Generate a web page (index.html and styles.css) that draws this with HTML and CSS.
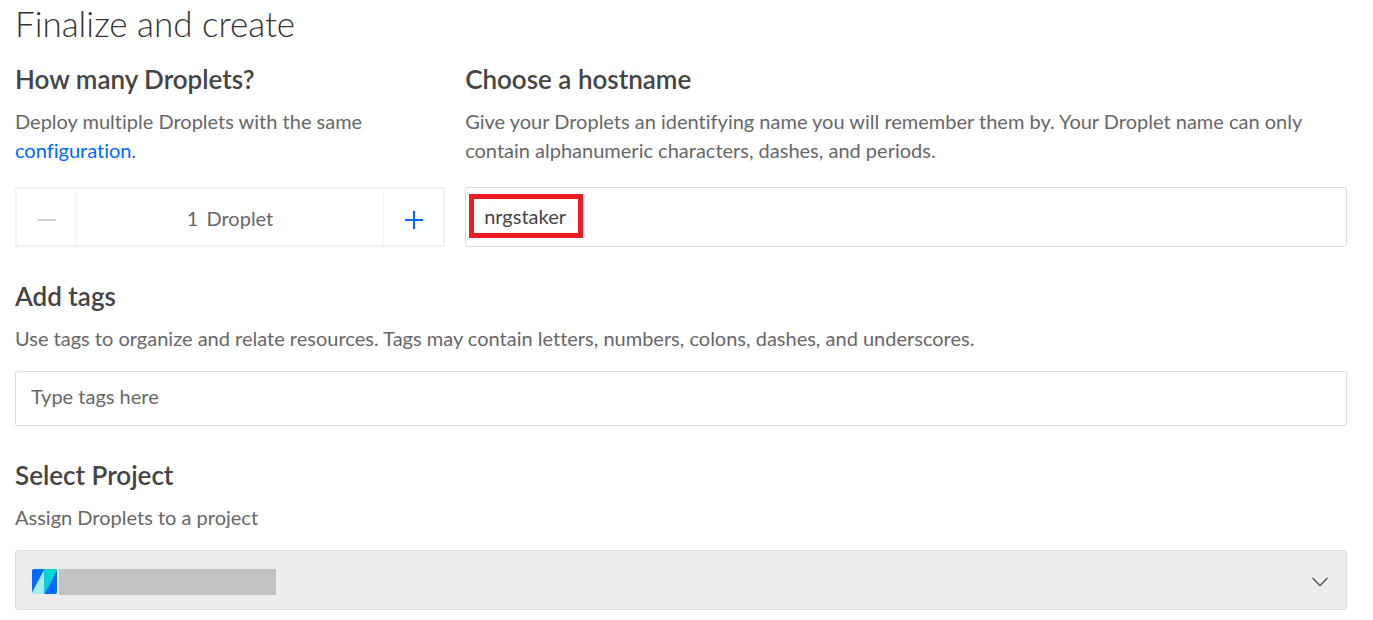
FILE: index.html
```
<!DOCTYPE html>
<html lang="en">
<head>
<meta charset="utf-8">
<title>Finalize and create</title>
<link rel="stylesheet" href="styles.css">
</head>
<body>
<main class="page">
  <h1 class="title">Finalize and create</h1>
  <form class="form">
    <div class="columns">
      <section class="count">
        <h2 class="heading">How many Droplets?</h2>
        <p class="text">Deploy multiple Droplets with the same <a class="link" href="#">configuration</a>.</p>
        <div class="stepper">
          <button class="step step-minus" type="button" aria-label="Remove a Droplet" disabled>
            <svg class="step-icon" viewBox="0 0 20 20" aria-hidden="true"><path d="M1 10H19"/></svg>
          </button>
          <output class="amount"><span>1</span><span>Droplet</span></output>
          <button class="step step-plus" type="button" aria-label="Add a Droplet">
            <svg class="step-icon" viewBox="0 0 20 20" aria-hidden="true"><path d="M1 10H19M10 1V19"/></svg>
          </button>
        </div>
      </section>
      <section class="host">
        <h2 class="heading"><label for="hostname">Choose a hostname</label></h2>
        <p class="text">Give your Droplets an identifying name you will remember them by. Your Droplet name can only contain alphanumeric characters, dashes, and periods.</p>
        <div class="field">
          <input class="input input-host" id="hostname" type="text" value="nrgstaker">
          <span class="marker"></span>
        </div>
      </section>
    </div>
    <section class="tags">
      <h2 class="heading"><label for="tags">Add tags</label></h2>
      <p class="text">Use tags to organize and relate resources. Tags may contain letters, numbers, colons, dashes, and underscores.</p>
      <input class="input input-tags" id="tags" type="text" placeholder="Type tags here">
    </section>
    <section class="project">
      <h2 class="heading"><label for="project">Select Project</label></h2>
      <p class="text">Assign Droplets to a project</p>
      <div class="field">
        <select class="input select" id="project"><option value=""></option></select>
        <span class="project-value">
          <svg class="project-icon" viewBox="0 0 25 25" aria-hidden="true">
            <rect width="25" height="25" rx="2" fill="#0069ff"/>
            <path d="M12.5 0V25H2Q0 25 0 23.500Z" fill="#a0f1ee"/>
            <path d="M12.500 0H23Q25 0 25 1.500L12.500 25Z" fill="#00d7d2"/>
          </svg>
          <span class="project-name"></span>
        </span>
        <svg class="chevron" viewBox="0 0 18 10" aria-hidden="true"><path d="M1.500 1L9 8.500L16.500 1"/></svg>
      </div>
    </section>
  </form>
</main>
</body>
</html>
```
FILE: styles.css
```
* {
  box-sizing: border-box;
}

body {
  margin: 0;
  background: #fff;
  color: #676767;
  font-family: Lato, "Open Sans", sans-serif;
  font-size: 20px;
  font-variant-ligatures: none;
  line-height: 29px;
}

.page {
  padding: 3px 26px 10px 15px;
}

.title {
  margin: 0 0 18px;
  color: #333;
  font-size: 35px;
  font-weight: 300;
  line-height: 40px;
}

.form {
  display: grid;
  gap: 31px;
}

.columns {
  display: grid;
  grid-template-columns: 1fr 2.05fr;
  gap: 20px;
}

.heading {
  margin: 0 0 10px;
  color: #444;
  font-size: 26px;
  font-weight: 600;
  line-height: 36px;
}

.text {
  margin: 0 0 18px;
}

.columns .text {
  margin-bottom: 22px;
}

.link {
  color: #0069ff;
  text-decoration: none;
}

.stepper {
  display: flex;
  height: 60px;
  border: 2px solid #f1f1f1;
}

.step {
  display: flex;
  align-items: center;
  justify-content: center;
  width: 60px;
  padding: 6px 0 0;
  border: 0;
  background: none;
  color: #0069ff;
}

.step-minus {
  border-right: 1px solid #f1f1f1;
  color: #d0d0d0;
}

.step-plus {
  border-left: 1px solid #f1f1f1;
}

.step-icon {
  width: 20px;
  height: 20px;
  fill: none;
  stroke: currentColor;
  stroke-width: 2;
}

.amount {
  display: flex;
  flex: 1;
  align-items: center;
  justify-content: center;
  gap: 8px;
  padding-top: 3px;
}

.field {
  position: relative;
}

.input {
  display: block;
  width: 100%;
  height: 60px;
  padding: 0 18px 2px;
  border: 1px solid #ddd;
  border-radius: 3px;
  background: #fff;
  color: #444;
  font: inherit;
}

.input-tags {
  height: 55px;
  padding: 0 15px 6px;
  border-radius: 2px;
}

.input-tags::placeholder {
  color: #676767;
  opacity: 1;
}

.marker {
  position: absolute;
  top: 7px;
  left: 4px;
  width: 114px;
  height: 44px;
  border: 5px solid #ed1c24;
  pointer-events: none;
}

.select {
  appearance: none;
  background: #ededed;
}

.project-value {
  position: absolute;
  top: 19px;
  left: 17px;
  display: flex;
  gap: 2px;
  pointer-events: none;
}

.project-icon {
  width: 25px;
  height: 25px;
}

.project-name {
  width: 217px;
  height: 26px;
  background: #c2c2c2;
}

.chevron {
  position: absolute;
  top: 27px;
  right: 18px;
  width: 18px;
  height: 10px;
  fill: none;
  stroke: #5b6471;
  stroke-width: 1.6;
  pointer-events: none;
}
```
